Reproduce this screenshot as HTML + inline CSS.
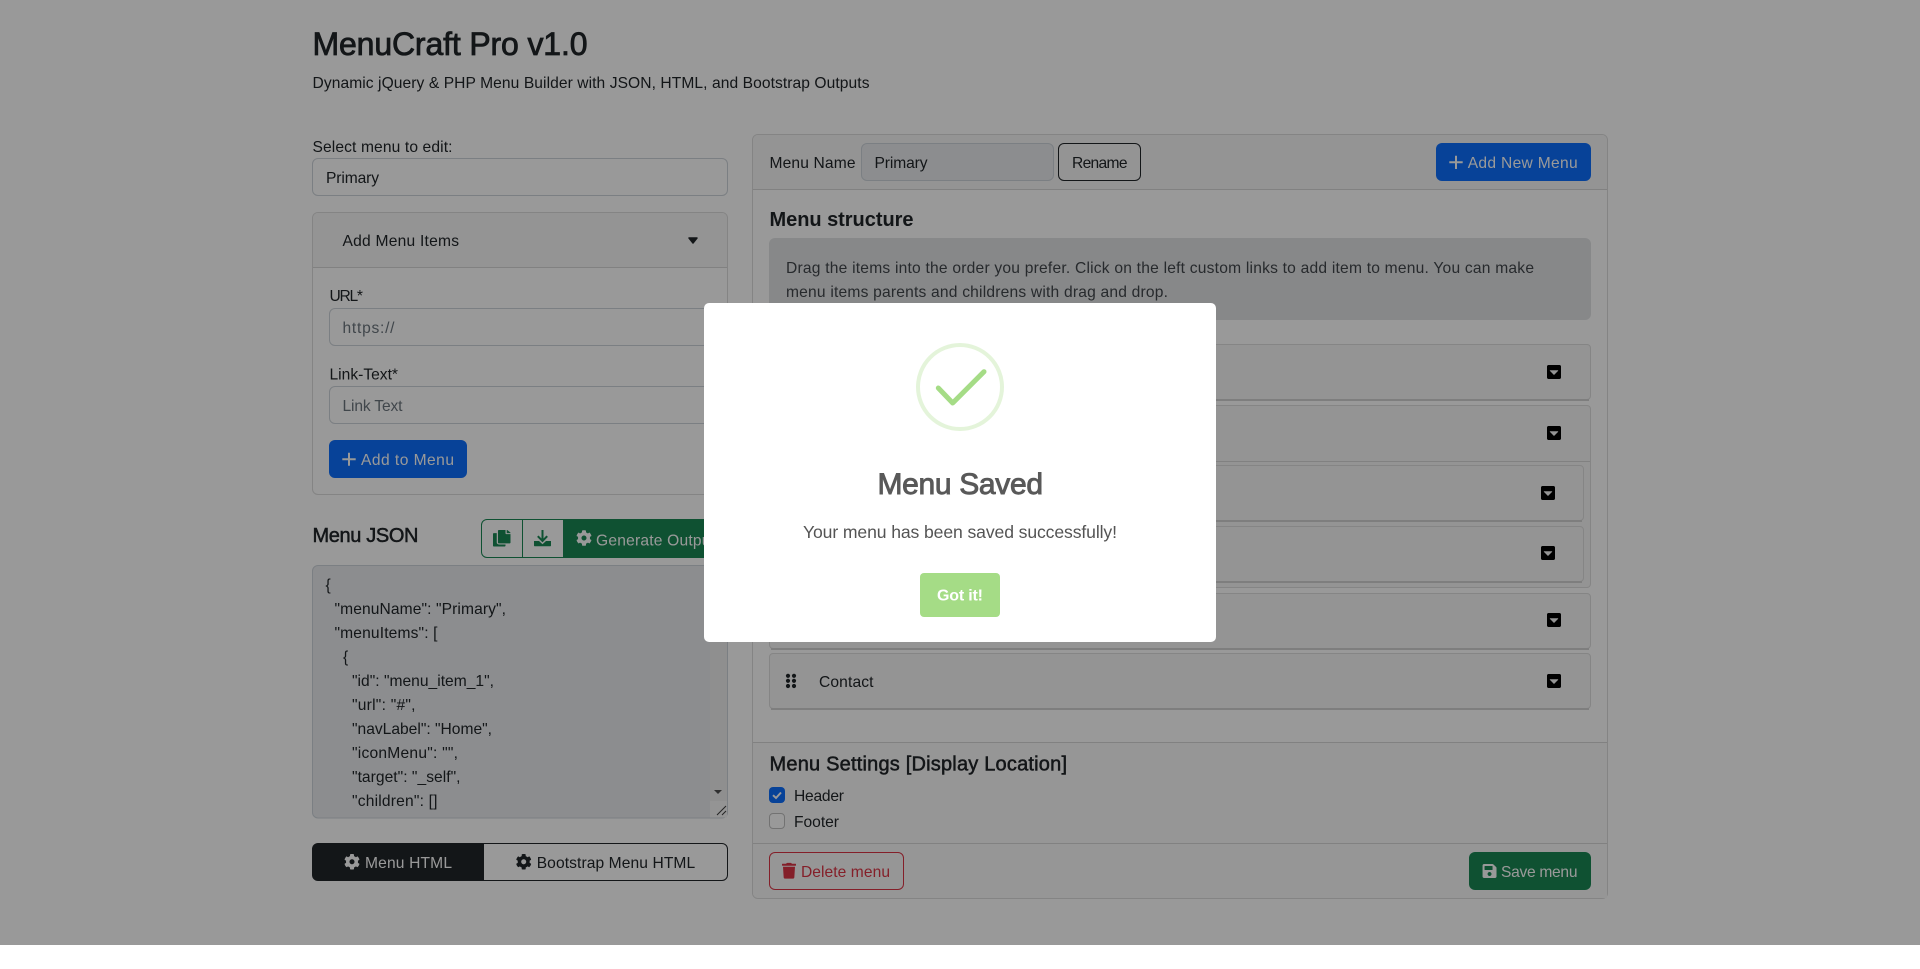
<!DOCTYPE html>
<html lang="en">
<head>
<meta charset="utf-8">
<title>MenuCraft Pro v1.0</title>
<style>
html,body{margin:0;padding:0;background:#fff;overflow:hidden}
svg{display:block}
text{font-family:"Liberation Sans",sans-serif;font-size:15.6px;fill:#212529}
.w{fill:#fff}
.ph{fill:#6c757d}
.alert{fill:#41464b}
</style>
</head>
<body>
<svg width="1920" height="969" viewBox="0 0 1920 969" xmlns="http://www.w3.org/2000/svg">
<defs>
<path id="cog" d="M487.4 315.7l-42.6-24.6c4.3-23.2 4.3-47 0-70.2l42.6-24.6c4.9-2.8 7.1-8.6 5.5-14-11.1-35.6-30-67.8-54.7-94.6-3.8-4.1-10-5.1-14.8-2.3L380.8 110c-17.9-15.4-38.5-27.3-60.8-35.1V25.8c0-5.6-3.9-10.5-9.4-11.7-36.7-8.2-74.3-7.8-109.2 0-5.5 1.2-9.4 6.1-9.4 11.7V75c-22.2 7.9-42.8 19.8-60.8 35.1L88.7 85.5c-4.9-2.8-11-1.9-14.8 2.3-24.7 26.7-43.6 58.9-54.7 94.6-1.7 5.4.6 11.2 5.5 14L67.3 221c-4.3 23.2-4.3 47 0 70.2l-42.6 24.6c-4.9 2.8-7.1 8.6-5.5 14 11.1 35.6 30 67.8 54.7 94.6 3.8 4.1 10 5.1 14.8 2.3l42.6-24.6c17.9 15.4 38.5 27.3 60.8 35.1v49.2c0 5.6 3.9 10.5 9.4 11.7 36.7 8.2 74.3 7.8 109.2 0 5.5-1.2 9.4-6.1 9.4-11.7v-49.2c22.2-7.9 42.8-19.8 60.8-35.1l42.6 24.6c4.9 2.8 11 1.9 14.8-2.3 24.7-26.7 43.6-58.9 54.7-94.6 1.5-5.5-.7-11.3-5.6-14.1zM256 336c-44.1 0-80-35.9-80-80s35.9-80 80-80 80 35.9 80 80-35.9 80-80 80z"/>
<path id="caret" d="M448 80v352c0 26.51-21.49 48-48 48H48c-26.51 0-48-21.49-48-48V80c0-26.51 21.49-48 48-48h352c26.51 0 48 21.49 48 48zM92.5 220.5l123 123c4.7 4.7 12.3 4.7 17 0l123-123c7.6-7.6 2.2-20.5-8.5-20.5H101c-10.7 0-16.1 12.9-8.5 20.5z" transform="scale(.03125) translate(0 -32)" fill="#000"/>
<clipPath id="ta"><rect x="313" y="566" width="398" height="251"/></clipPath>
</defs>

<!-- Page -->
<rect width="1920" height="969" fill="#fff"/>

<text x="312.5" y="55" style="font-size:32px;stroke:#212529;stroke-width:.8px" textLength="275">MenuCraft Pro v1.0</text>
<text x="312.5" y="88" textLength="557">Dynamic jQuery &amp; PHP Menu Builder with JSON, HTML, and Bootstrap Outputs</text>

<!-- Left column -->
<text x="312.5" y="152" textLength="140">Select menu to edit:</text>
<rect x="312.5" y="158.5" width="415" height="37" rx="5.5" fill="#fff" stroke="#ced4da"/>
<text x="326" y="183" textLength="53">Primary</text>

<rect x="312.5" y="212.5" width="415" height="282" rx="5.5" fill="#fff" stroke="#dcdcdc"/>
<path d="M313 267V218a5 5 0 0 1 5-5H722a5 5 0 0 1 5 5V267z" fill="#f7f7f7"/>
<path d="M313 267.500H727" stroke="#d8d8d8"/>
<text x="342.500" y="246" textLength="116.500">Add Menu Items</text>
<polygon points="689,238 697,238 693,243" fill="#212529" stroke="#212529" stroke-width="1.500" stroke-linejoin="round"/>

<text x="329.500" y="301" textLength="33.500">URL*</text>
<rect x="329.500" y="308.500" width="381" height="37" rx="5.500" fill="#fff" stroke="#ced4da"/>
<text x="342.500" y="333" class="ph" textLength="52">https://</text>
<text x="329.500" y="379.500" textLength="68.500">Link-Text*</text>
<rect x="329.500" y="386.500" width="381" height="37" rx="5.500" fill="#fff" stroke="#ced4da"/>
<text x="342.500" y="411" class="ph" textLength="60">Link Text</text>
<rect x="329" y="440" width="138" height="38" rx="6" fill="#0d6efd"/>
<path d="M349 452.700V465.700M342.300 459.200H355.700" stroke="#fff" stroke-width="2"/>
<text x="361" y="465" class="w" textLength="93">Add to Menu</text>

<text x="312.500" y="542" style="font-size:20px;stroke:#212529;stroke-width:.5px" textLength="106">Menu JSON</text>
<path d="M563 519.500H487a5.500 5.500 0 0 0-5.500 5.500v27a5.500 5.500 0 0 0 5.500 5.500H563" fill="#fff" stroke="#198754"/>
<path d="M522.500 519V558" stroke="#198754"/>
<path d="M563 519H722a6 6 0 0 1 6 6v27a6 6 0 0 1-6 6H563z" fill="#198754"/>
<svg x="493" y="530" width="17.500" height="16.500" viewBox="0 0 448 512" preserveAspectRatio="none"><path fill="#198754" d="M320 448v40c0 13.255-10.745 24-24 24H24c-13.255 0-24-10.745-24-24V120c0-13.255 10.745-24 24-24h72v296c0 30.879 25.121 56 56 56h168zm0-344V0H152c-13.255 0-24 10.745-24 24v368c0 13.255 10.745 24 24 24h272c13.255 0 24-10.745 24-24V128H344c-13.200 0-24-10.800-24-24zm120.971-31.029L375.029 7.029A24 24 0 0 0 358.059 0H352v96h96v-6.059a24 24 0 0 0-7.029-16.970z"/></svg>
<path d="M542.500 530V540.500M537.800 536.200L542.500 541L547.200 536.200" fill="none" stroke="#198754" stroke-width="2"/>
<path d="M534 541H539L542.500 544.300L546 541H551V545.500A.8.8 0 0 1 550.200 546.300H534.800A.8.8 0 0 1 534 545.500z" fill="#198754"/>
<use href="#cog" transform="translate(576 530) scale(.03125)" fill="#fff"/>
<text x="596" y="545.500" class="w" textLength="119">Generate Output</text>

<rect x="312.500" y="565.500" width="415" height="252.500" rx="5.500" fill="#e9ecef" stroke="#ced4da"/>
<g clip-path="url(#ta)">
<text x="325.500" y="590">{</text>
<text x="334.500" y="614" textLength="171.500">&quot;menuName&quot;: &quot;Primary&quot;,</text>
<text x="334.500" y="638" textLength="103">&quot;menuItems&quot;: [</text>
<text x="343" y="662">{</text>
<text x="352" y="686" textLength="142">&quot;id&quot;: &quot;menu_item_1&quot;,</text>
<text x="352" y="710" textLength="63.500">&quot;url&quot;: &quot;#&quot;,</text>
<text x="352" y="734" textLength="140">&quot;navLabel&quot;: &quot;Home&quot;,</text>
<text x="352" y="758" textLength="106">&quot;iconMenu&quot;: &quot;&quot;,</text>
<text x="352" y="782" textLength="108.500">&quot;target&quot;: &quot;_self&quot;,</text>
<text x="352" y="806" textLength="85.500">&quot;children&quot;: []</text>
</g>
<rect x="710" y="566" width="17" height="251.500" fill="#eeeeee"/>
<rect x="710" y="801" width="17" height="16.500" fill="#f7f7f7"/>
<polygon points="714,790 722,790 718,794" fill="#505050"/>
<path d="M717 815L726 806M722 815L726 811" stroke="#3c3c3c" stroke-width="1"/>

<path d="M484 843.500H722a5.500 5.500 0 0 1 5.500 5.500v26a5.500 5.500 0 0 1-5.500 5.500H484" fill="#fff" stroke="#212529"/>
<path d="M318 843H484V881H318a6 6 0 0 1-6-6V849a6 6 0 0 1 6-6z" fill="#212529"/>
<use href="#cog" transform="translate(344 853.800) scale(.03125)" fill="#fff"/>
<text x="365" y="868" class="w" textLength="87">Menu HTML</text>
<use href="#cog" transform="translate(515.700 853.800) scale(.03125)" fill="#212529"/>
<text x="536.700" y="868" textLength="158.500">Bootstrap Menu HTML</text>

<!-- Right panel -->
<rect x="752.500" y="134.500" width="855" height="764" rx="5.500" fill="#fff" stroke="#dcdcdc"/>
<path d="M753 189V140a5 5 0 0 1 5-5H1602a5 5 0 0 1 5 5V189z" fill="#f7f7f7"/>
<path d="M753 189.500H1607" stroke="#d8d8d8"/>
<text x="769.500" y="168" textLength="86">Menu Name</text>
<rect x="861.500" y="143.500" width="192" height="37" rx="5.500" fill="#e9ecef" stroke="#ced4da"/>
<text x="874.500" y="168" textLength="53">Primary</text>
<rect x="1058.500" y="143.500" width="82" height="37" rx="5.500" fill="none" stroke="#212529"/>
<text x="1072" y="168" textLength="55.500">Rename</text>
<rect x="1436" y="143" width="155" height="38" rx="6" fill="#0d6efd"/>
<path d="M1456 155.700V169M1449.300 162.300H1462.700" stroke="#fff" stroke-width="2"/>
<text x="1467.700" y="168" class="w" textLength="110">Add New Menu</text>

<text x="769.500" y="226" style="font-size:20px;font-weight:bold" textLength="144">Menu structure</text>
<rect x="769" y="238" width="822" height="82" rx="6" fill="#e2e3e5"/>
<text x="786" y="273" class="alert" textLength="748">Drag the items into the order you prefer. Click on the left custom links to add item to menu. You can make</text>
<text x="786" y="297" class="alert" textLength="382">menu items parents and childrens with drag and drop.</text>

<!-- Menu items -->
<g fill="#f7f7f7" stroke="#dedede">
<rect x="769.500" y="344.500" width="821" height="55" rx="3.500"/>
<rect x="769.500" y="405.500" width="821" height="182" rx="3.500"/>
<rect x="769.500" y="593.500" width="821" height="55" rx="3.500"/>
<rect x="769.500" y="653.500" width="821" height="55" rx="3.500"/>
</g>
<path d="M770 461.500H1590" stroke="#d8d8d8"/>
<g fill="#f7f7f7" stroke="#dedede">
<rect x="784.500" y="465.500" width="799" height="55" rx="3.500"/>
<rect x="784.500" y="526.500" width="799" height="55" rx="3.500"/>
</g>
<g stroke="#d2d2d2" stroke-width="2" fill="none">
<path d="M771 400H1589"/><path d="M771 649H1589"/><path d="M771 709H1589"/>
<path d="M786 521H1582"/><path d="M786 582H1582"/>
</g>
<use href="#caret" transform="translate(1547 365)"/>
<use href="#caret" transform="translate(1547 426)"/>
<use href="#caret" transform="translate(1541 486)"/>
<use href="#caret" transform="translate(1541 546)"/>
<use href="#caret" transform="translate(1547 613)"/>
<use href="#caret" transform="translate(1547 674)"/>
<g fill="#212529">
<circle cx="788" cy="675.800" r="2.100"/><circle cx="794" cy="675.800" r="2.100"/>
<circle cx="788" cy="680.800" r="2.100"/><circle cx="794" cy="680.800" r="2.100"/>
<circle cx="788" cy="686" r="2.100"/><circle cx="794" cy="686" r="2.100"/>
</g>
<text x="819" y="687" textLength="54.500">Contact</text>

<!-- Settings -->
<path d="M753 742.500H1607V898H758a5 5 0 0 1-5-5z" fill="#fbfbfb"/>
<path d="M753 742.500H1607" stroke="#d8d8d8"/>
<path d="M753 843.500H1607" stroke="#d8d8d8"/>
<text x="769.500" y="770.700" style="font-size:20px;stroke:#212529;stroke-width:.5px" textLength="297.500">Menu Settings [Display Location]</text>
<rect x="769" y="787" width="16" height="16" rx="4" fill="#0d6efd"/>
<path d="M773 795.200L776 798L781 792.500" fill="none" stroke="#fff" stroke-width="2"/>
<text x="794" y="801" textLength="50">Header</text>
<rect x="769.500" y="813.500" width="15" height="15" rx="3.500" fill="#fff" stroke="#bfbfbf"/>
<text x="794" y="827" textLength="45">Footer</text>

<rect x="769.500" y="852.500" width="134" height="37" rx="5.500" fill="none" stroke="#dc3545"/>
<svg x="782" y="862.700" width="14" height="16" viewBox="0 0 448 512"><path fill="#dc3545" d="M432 32H312l-9.400-18.700A24 24 0 0 0 281.100 0H166.800a23.720 23.720 0 0 0-21.400 13.300L136 32H16A16 16 0 0 0 0 48v32a16 16 0 0 0 16 16h416a16 16 0 0 0 16-16V48a16 16 0 0 0-16-16zM53.200 467a48 48 0 0 0 47.900 45h245.800a48 48 0 0 0 47.900-45L416 128H32z"/></svg>
<text x="801" y="877" style="fill:#dc3545" textLength="89">Delete menu</text>
<rect x="1469" y="852" width="122" height="38" rx="6" fill="#198754"/>
<svg x="1482.300" y="863" width="14.500" height="16" viewBox="0 0 448 512"><path fill="#fff" d="M433.941 129.941l-83.882-83.882A48 48 0 0 0 316.118 32H48C21.490 32 0 53.490 0 80v352c0 26.510 21.490 48 48 48h352c26.510 0 48-21.490 48-48V163.882a48 48 0 0 0-14.059-33.941zM224 416c-35.346 0-64-28.654-64-64 0-35.346 28.654-64 64-64s64 28.654 64 64c0 35.346-28.654 64-64 64zm96-304.520V212c0 6.627-5.373 12-12 12H76c-6.627 0-12-5.373-12-12V108c0-6.627 5.373-12 12-12h228.520c3.183 0 6.235 1.264 8.485 3.515l3.480 3.480A11.996 11.996 0 0 1 320 111.480z"/></svg>
<text x="1501" y="877" class="w" textLength="76.500">Save menu</text>

<!-- Backdrop -->
<rect x="0" y="0" width="1920" height="945" fill="#000" fill-opacity=".4"/>

<!-- Modal -->
<rect x="704" y="303" width="512" height="339" rx="5" fill="#fff"/>
<circle cx="960" cy="387" r="42" fill="none" stroke="#a5dc86" stroke-opacity=".3" stroke-width="4"/>
<path d="M938.300 388L952.700 403L984 371.700" fill="none" stroke="#a5dc86" stroke-width="5" stroke-linecap="round" stroke-linejoin="round"/>
<text x="877.500" y="494" style="font-size:30px;fill:#595959;stroke:#595959;stroke-width:.9px" textLength="165.500">Menu Saved</text>
<text x="803" y="538" style="font-size:17.6px;fill:#545454" textLength="314">Your menu has been saved successfully!</text>
<rect x="920" y="573" width="80" height="44" rx="4" fill="#a5dc86"/>
<text x="937" y="600.700" style="font-size:16px;font-weight:bold;fill:#fff" textLength="46">Got it!</text>
</svg>
</body>
</html>
